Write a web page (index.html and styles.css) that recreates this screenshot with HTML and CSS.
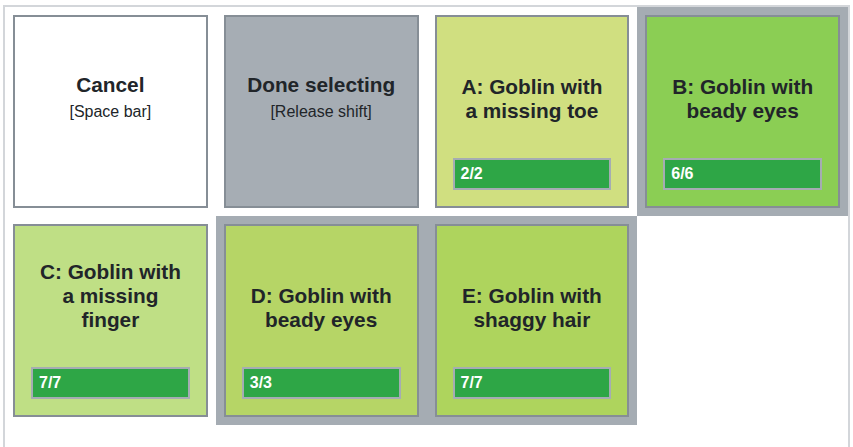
FILE: index.html
```html
<!DOCTYPE html>
<html lang="en">
<head>
  <meta charset="UTF-8">
  <title>Goblin selection</title>
  <link rel="stylesheet" href="styles.css">
</head>
<body>

  <!-- choice grid -->
  <div class="board">
    <div class="cell">
      <div class="card card-cancel">
        <div class="card-title">
          <div class="name">Cancel</div>
          <div class="hint">[Space bar]</div>
        </div>
      </div>
    </div>
    <div class="cell">
      <div class="card card-done">
        <div class="card-title">
          <div class="name">Done selecting</div>
          <div class="hint">[Release shift]</div>
        </div>
      </div>
    </div>
    <div class="cell">
      <div class="card card-a">
        <div class="card-title">
          <div class="name">A: Goblin with a missing toe</div>
        </div>
        <div class="bar">2/2</div>
      </div>
    </div>
    <div class="cell selected">
      <div class="card card-b">
        <div class="card-title">
          <div class="name">B: Goblin with beady eyes</div>
        </div>
        <div class="bar">6/6</div>
      </div>
    </div>

    <div class="cell">
      <div class="card card-c">
        <div class="card-title">
          <div class="name">C: Goblin with a missing finger</div>
        </div>
        <div class="bar">7/7</div>
      </div>
    </div>
    <div class="cell selected">
      <div class="card card-d">
        <div class="card-title">
          <div class="name">D: Goblin with beady eyes</div>
        </div>
        <div class="bar">3/3</div>
      </div>
    </div>
    <div class="cell selected">
      <div class="card card-e">
        <div class="card-title">
          <div class="name">E: Goblin with shaggy hair</div>
        </div>
        <div class="bar">7/7</div>
      </div>
    </div>
  </div>

</body>
</html>
```

FILE: styles.css
```css
/* base */
body {
  margin: 0;
  padding: 5px 3px 0;
  font-family: "Liberation Sans", Arial, sans-serif;
  color: #212529;
  overflow: hidden;
}

.board {
  display: grid;
  grid-template-columns: repeat(4, 1fr);
  grid-auto-rows: 209px;
  align-content: start;
  height: 442px;
  box-sizing: border-box;
  border: 2px solid #d3d6da;
  border-bottom: 0;
}

.cell {
  padding: 8px;
}
.cell.selected {
  background-color: #a5acb3;
}

/* cards */
.card {
  display: flex;
  flex-direction: column;
  height: 100%;
  box-sizing: border-box;
  padding: 16px;
  border: 2px solid #868e96;
  text-align: center;
}
.card-title {
  height: 90px;
  padding: 0 4px;
  display: flex;
  flex-direction: column;
  justify-content: flex-end;
}
.name {
  font-size: 20.8px;
  font-weight: bold;
}
.hint {
  font-size: 16px;
  margin-top: 6px;
  margin-bottom: 2px;
}

.card-cancel { background-color: #fff; }
.card-done   { background-color: #a6adb4; }
.card-a      { background-color: #d0df80; }
.card-b      { background-color: #8bce54; }
.card-c      { background-color: #bfdf85; }
.card-d      { background-color: #b6d566; }
.card-e      { background-color: #aed45d; }

/* progress bar */
.bar {
  margin-top: auto;
  height: 32px;
  box-sizing: border-box;
  padding: 0 6px;
  border: 2px solid #a5acb3;
  background-color: #2ea646;
  color: #fff;
  font-size: 16px;
  font-weight: bold;
  line-height: 28px;
  text-align: left;
}
```
